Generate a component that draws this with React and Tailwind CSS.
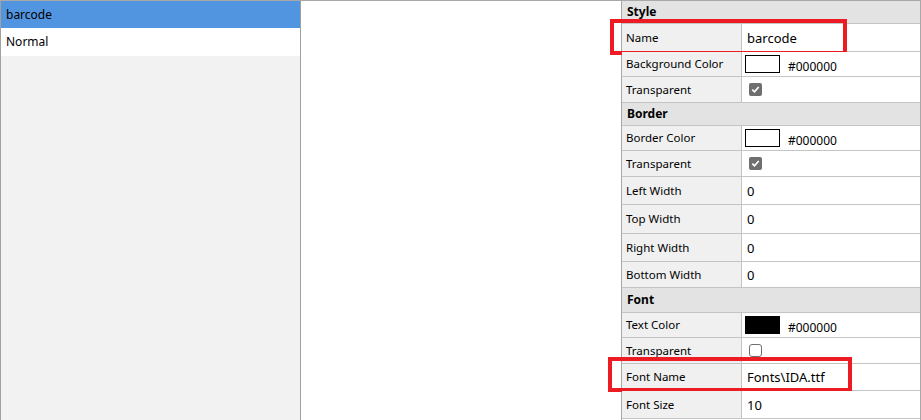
import React from 'react';

const rows = [
  { type: 'header', label: 'Style', h: 'h-[23px]' },
  { type: 'text', label: 'Name', value: 'barcode', h: 'h-[28px]', mark: 'name' },
  { type: 'color', label: 'Background Color', swatch: 'bg-white', value: '#000000', h: 'h-[25px]' },
  { type: 'check', label: 'Transparent', checked: true, h: 'h-[26px]' },
  { type: 'header', label: 'Border', h: 'h-[23px]' },
  { type: 'color', label: 'Border Color', swatch: 'bg-white', value: '#000000', h: 'h-[25px]' },
  { type: 'check', label: 'Transparent', checked: true, h: 'h-[26px]' },
  { type: 'text', label: 'Left Width', value: '0', h: 'h-[28px]' },
  { type: 'text', label: 'Top Width', value: '0', h: 'h-[29px]' },
  { type: 'text', label: 'Right Width', value: '0', h: 'h-[28px]' },
  { type: 'text', label: 'Bottom Width', value: '0', h: 'h-[26px]' },
  { type: 'header', label: 'Font', h: 'h-[25px]' },
  { type: 'color', label: 'Text Color', swatch: 'bg-black', value: '#000000', h: 'h-[25px]' },
  { type: 'check', label: 'Transparent', checked: false, h: 'h-[26px]' },
  { type: 'text', label: 'Font Name', value: 'Fonts\\IDA.ttf', h: 'h-[27px]', mark: 'font' },
  { type: 'text', label: 'Font Size', value: '10', h: 'h-[28px]' },
];

const Checkbox = ({ checked }) =>
  checked ? (
    <span className="mt-[6px] ml-[7px] flex h-[13px] w-[13px] items-center justify-center rounded-[2px] bg-[#6f6f6f]">
      <svg width="9" height="9" viewBox="0 0 9 9">
        <path d="M1.3 4.6 L3.5 6.8 L7.7 2" fill="none" stroke="white" strokeWidth="1.7" />
      </svg>
    </span>
  ) : (
    <span className="mt-[6px] ml-[7px] h-[13px] w-[13px] rounded-[3px] border border-[#6f6f6f] bg-white" />
  );

const PropRow = ({ row }) => {
  if (row.type === 'header') {
    return (
      <div className={`${row.h} flex items-center border-b border-[#c4c4c4] bg-[#e3e3e3] pl-[5px] text-[12px] font-bold text-black`}>
        {row.label}
      </div>
    );
  }

  return (
    <div className={`${row.h} relative flex border-b border-[#c4c4c4]`}>
      <div className="flex w-[120px] shrink-0 items-center border-r border-[#c4c4c4] bg-[#f0f0f0] pl-[4px] text-[11.5px] text-black">
        {row.label}
      </div>
      <div className="flex flex-1 bg-white">
        {row.type === 'text' && (
          <span className="flex items-center pl-[5px] pt-[2px] text-[13px] text-black">{row.value}</span>
        )}
        {row.type === 'color' && (
          <div className="flex items-start pl-[3px] pt-[3px]">
            <span className={`h-[18px] w-[35px] border border-black ${row.swatch}`} />
            <span className="ml-[8px] mt-[6px] text-[12px] leading-none text-black">{row.value}</span>
          </div>
        )}
        {row.type === 'check' && <Checkbox checked={row.checked} />}
      </div>

      {/* red highlight boxes */}
      {row.mark === 'name' && (
        <div className="absolute left-[-12px] top-[-5px] h-[36px] w-[237px] border-[4px] border-[#ed1c24]" />
      )}
      {row.mark === 'font' && (
        <div className="absolute left-[-14px] top-[-7px] h-[35px] w-[244px] border-[4px] border-[#ed1c24]" />
      )}
    </div>
  );
};

export default function App() {
  return (
    <div
      className="flex h-[420px] w-[921px] overflow-hidden border-t border-[#a8a8a8] bg-white"
      style={{ fontFamily: '"Noto Sans", "Open Sans", sans-serif' }}
    >
      {/* style list */}
      <div className="w-[301px] shrink-0 border-l border-r border-[#a0a0a0] bg-[#f2f2f2] text-[12px]">
        <div className="flex h-[27px] items-center bg-[#5194df] pl-[5px] text-black">barcode</div>
        <div className="flex h-[28px] items-center bg-white pl-[5px] text-black">Normal</div>
      </div>

      {/* canvas */}
      <div className="flex-1 bg-white" />

      {/* property grid */}
      <div className="w-[300px] shrink-0 border-l border-r border-[#a8a8a8] bg-white">
        {rows.map((row, i) => (
          <PropRow key={i} row={row} />
        ))}
      </div>
    </div>
  );
}
